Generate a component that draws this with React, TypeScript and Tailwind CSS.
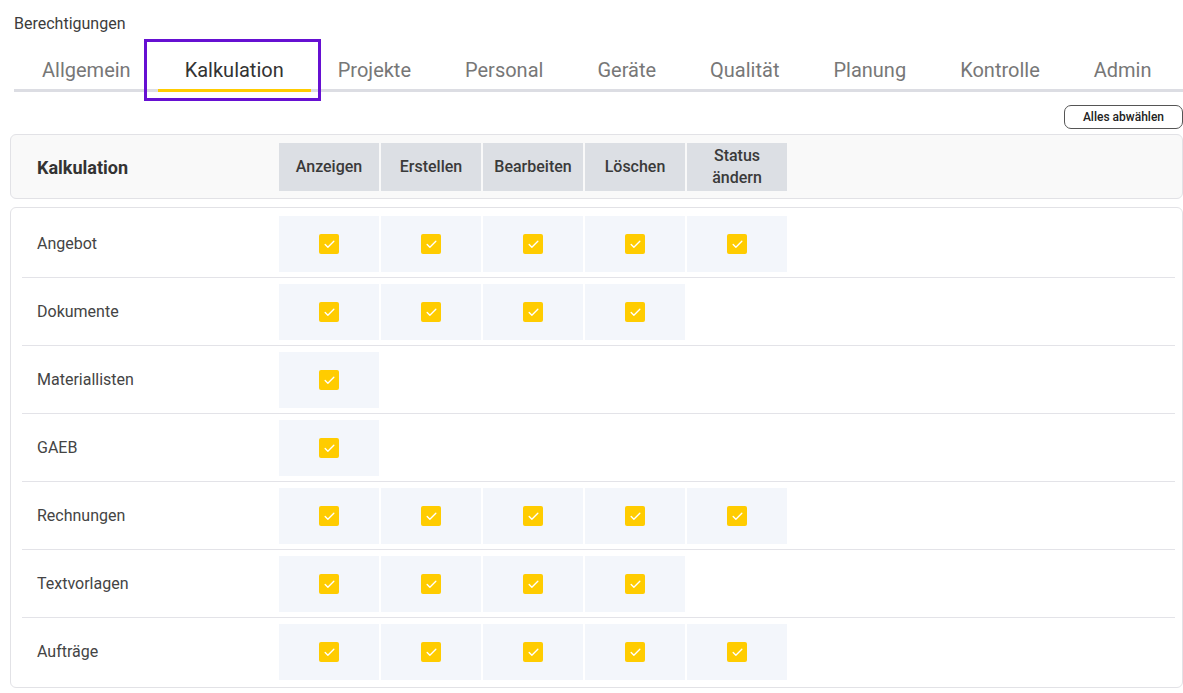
import { Check } from 'lucide-react';

const tabs = ['Allgemein', 'Kalkulation', 'Projekte', 'Personal', 'Geräte', 'Qualität', 'Planung', 'Kontrolle', 'Admin'];

const columns = ['Anzeigen', 'Erstellen', 'Bearbeiten', 'Löschen', 'Status ändern'];

// how many of the columns each module has (always from the left)
const rows: { name: string; count: number }[] = [
  { name: 'Angebot', count: 5 },
  { name: 'Dokumente', count: 4 },
  { name: 'Materiallisten', count: 1 },
  { name: 'GAEB', count: 1 },
  { name: 'Rechnungen', count: 5 },
  { name: 'Textvorlagen', count: 4 },
  { name: 'Aufträge', count: 5 },
];

function Checkbox() {
  return (
    <span className="flex h-5 w-5 items-center justify-center rounded-[2px] bg-[#ffcc00]">
      <Check className="h-[13px] w-[13px] text-white" strokeWidth={2.5} />
    </span>
  );
}

export default function App() {
  return (
    <div className="min-h-screen bg-white font-['Roboto',_'Liberation_Sans',_sans-serif] text-[#333]">
      {/* title + tabs */}
      <div className="pl-[14px] pt-[13px]">
        <div className="text-[16px] leading-[22px] text-[#3c3c3c]">Berechtigungen</div>
        <div className="mt-[13px] flex border-b-[3px] border-[#dcdde3] pl-px">
          {tabs.map(tab => {
            const active = tab === 'Kalkulation';
            return (
              <div
                key={tab}
                className={
                  active
                    ? 'relative -mb-[3px] border-b-[3px] border-[#ffcc00] px-[27px] pb-[8px] pt-[11px] text-[20px] leading-[22px] text-[#333]'
                    : 'px-[27px] pb-[8px] pt-[11px] text-[20px] leading-[22px] text-[#777]'
                }
              >
                {tab}
                {active && (
                  <span className="pointer-events-none absolute -bottom-[12px] -left-[14px] -right-[10px] -top-[9px] border-[3px] border-[#6610d2]" />
                )}
              </div>
            );
          })}
        </div>
      </div>

      <div className="pl-[10px]">
        <div className="mt-[13px] flex justify-end">
          <button className="h-[24px] rounded-[7px] border border-[#555] px-[18px] text-[12px] font-medium leading-none text-[#222]">
            Alles abwählen
          </button>
        </div>

        {/* header card */}
        <div className="mt-[5px] flex items-center rounded-[6px] border border-[#e2e2e6] bg-[#f9f9f9] pb-[7px] pl-[26px] pt-[8px]">
          <div className="w-[242px] text-[18px] font-bold text-[#333]">Kalkulation</div>
          <div className="flex gap-[2px]">
            {columns.map(col => (
              <div
                key={col}
                className="flex h-[48px] w-[100px] items-center justify-center bg-[#dcdfe4] px-2 text-center text-[16px] font-medium leading-[22px] text-[#3a3a3a]"
              >
                {col}
              </div>
            ))}
          </div>
        </div>

        {/* body card */}
        <div className="mt-[8px] rounded-[6px] border border-[#e2e2e6] bg-white pb-[2px] pl-[11px] pr-[7px] pt-[2px]">
          {rows.map((row, i) => (
            <div
              key={row.name}
              className={`flex items-center pb-[5px] pl-[15px] pt-[6px] ${i < rows.length - 1 ? 'border-b border-[#e3e3e8]' : ''}`}
            >
              <div className="w-[242px] text-[16px] text-[#444]">{row.name}</div>
              <div className="flex gap-[2px]">
                {columns.slice(0, row.count).map(col => (
                  <div key={col} className="flex h-[56px] w-[100px] items-center justify-center bg-[#f3f6fb]">
                    <Checkbox />
                  </div>
                ))}
              </div>
            </div>
          ))}
        </div>
      </div>
    </div>
  );
}
